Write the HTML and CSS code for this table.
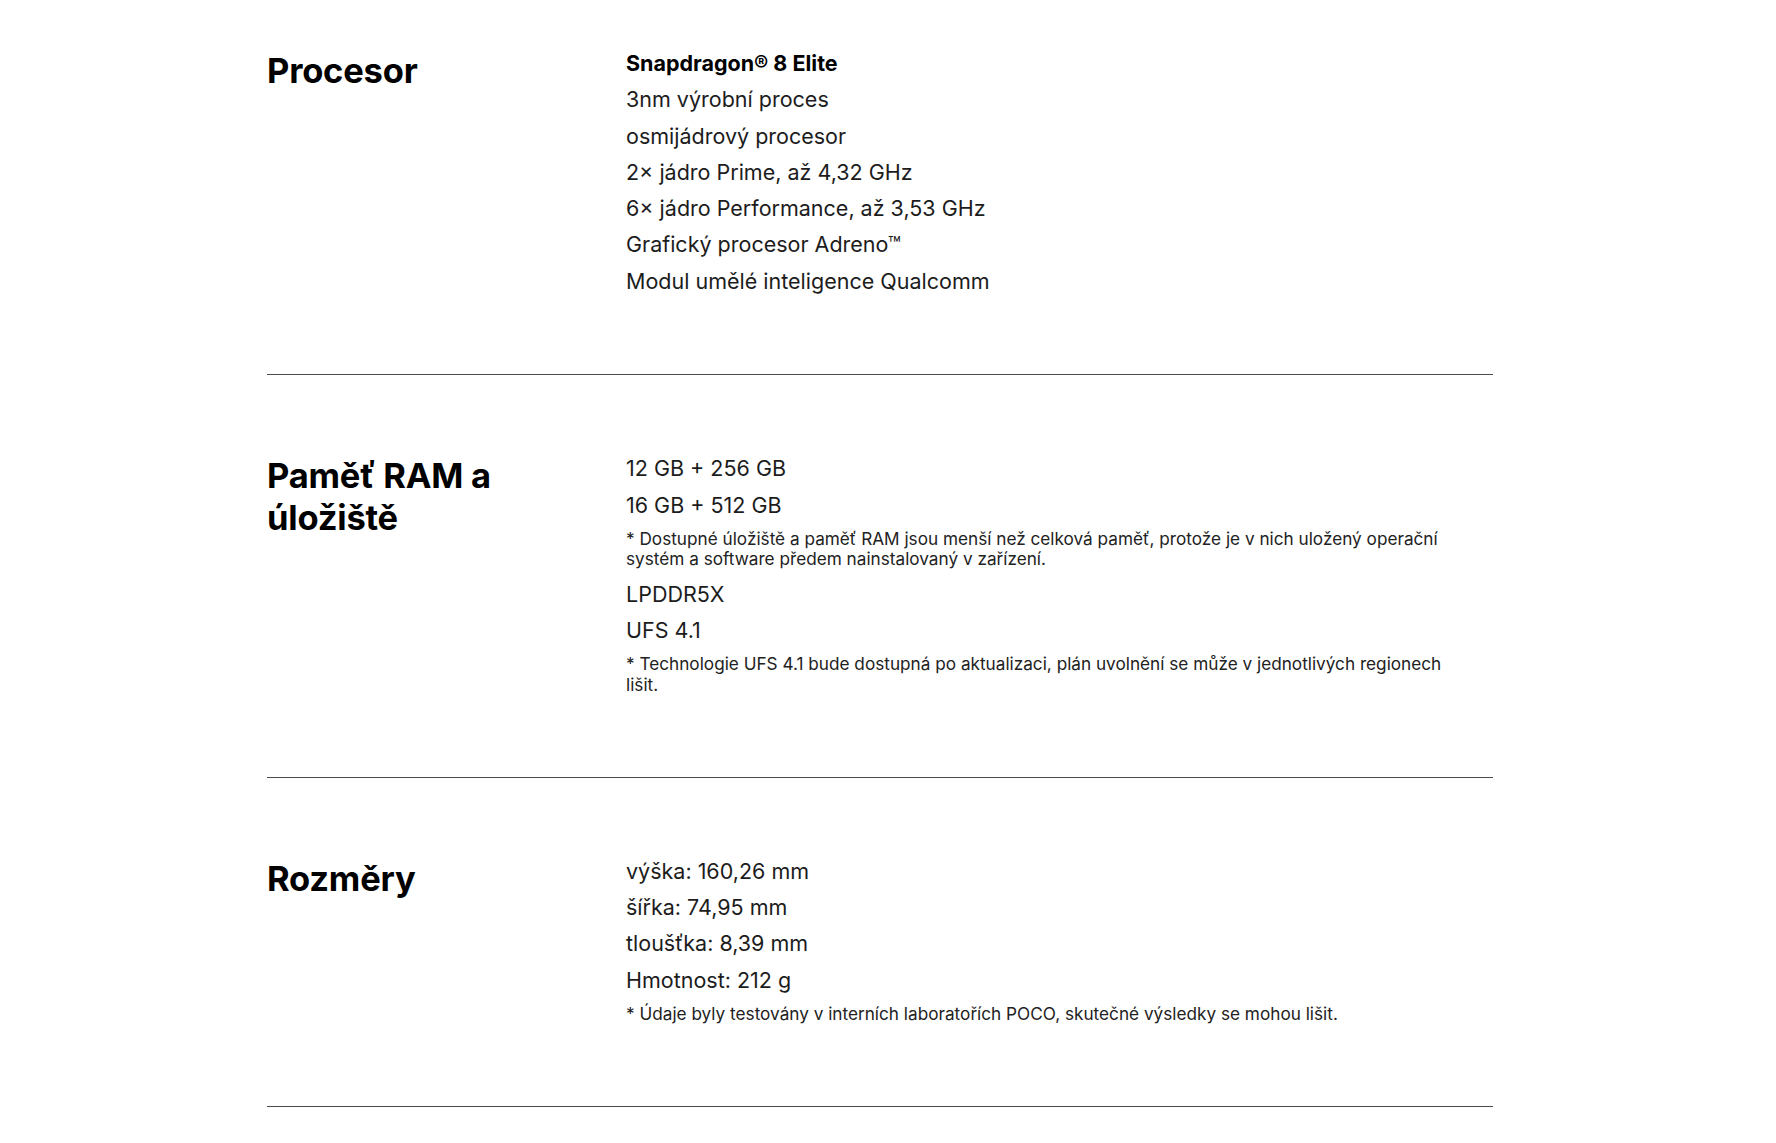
FILE: index.html
```html
<html lang="cs">
<head>
    <meta charset="UTF-8">
    <meta name="viewport" content="width=device-width, initial-scale=1.0">
    <title>Specifikace</title>
    <link rel="stylesheet" href="styles.css">
</head>
<body>
    <div class="specs">
        <section class="spec first">
            <h2 class="spec-title">Procesor</h2>
            <div class="spec-body">
                <p class="strong">Snapdragon® 8 Elite</p>
                <p>3nm výrobní proces</p>
                <p>osmijádrový procesor</p>
                <p>2× jádro Prime, až 4,32 GHz</p>
                <p>6× jádro Performance, až 3,53 GHz</p>
                <p>Grafický procesor Adreno™</p>
                <p>Modul umělé inteligence Qualcomm</p>
            </div>
        </section>

        <section class="spec">
            <h2 class="spec-title">Paměť RAM a úložiště</h2>
            <div class="spec-body">
                <p>12 GB + 256 GB</p>
                <p>16 GB + 512 GB</p>
                <p class="note">* Dostupné úložiště a paměť RAM jsou menší než celková paměť, protože je v nich uložený operační systém a software předem nainstalovaný v zařízení.</p>
                <p>LPDDR5X</p>
                <p>UFS 4.1</p>
                <p class="note">* Technologie UFS 4.1 bude dostupná po aktualizaci, plán uvolnění se může v jednotlivých regionech lišit.</p>
            </div>
        </section>

        <section class="spec">
            <h2 class="spec-title">Rozměry</h2>
            <div class="spec-body">
                <p>výška: 160,26 mm</p>
                <p>šířka: 74,95 mm</p>
                <p>tloušťka: 8,39 mm</p>
                <p>Hmotnost: 212 g</p>
                <p class="note">* Údaje byly testovány v interních laboratořích POCO, skutečné výsledky se mohou lišit.</p>
            </div>
        </section>
    </div>
</body>
</html>
```

FILE: styles.css
```css
body {
    margin: 0;
    background-color: #ffffff;
    color: #1c1c1c;
    font-family: 'Inter', 'Noto Sans', sans-serif;
}

.specs {
    width: 1226px;
    margin-left: 267px;
}

.spec {
    display: flex;
    padding: 75px 0 75.5px;
    border-bottom: 1px solid #4a4a4a;
}

.spec.first {
    padding-top: 45px;
}

.spec-title {
    width: 359px;
    flex-shrink: 0;
    margin: 5px 0 0 0;
    font-size: 34.5px;
    line-height: 42px;
    font-weight: 700;
    color: #000000;
    letter-spacing: -0.2px;
}

.spec-body {
    width: 830px;
}

.spec-body p {
    margin: 0;
    font-size: 21.5px;
    line-height: 36.25px;
}

.spec-body p.strong {
    font-weight: 700;
    color: #000000;
}

.spec-body p.note {
    margin: 6px 0;
    font-size: 17.2px;
    line-height: 20.5px;
    color: #222222;
}
```
